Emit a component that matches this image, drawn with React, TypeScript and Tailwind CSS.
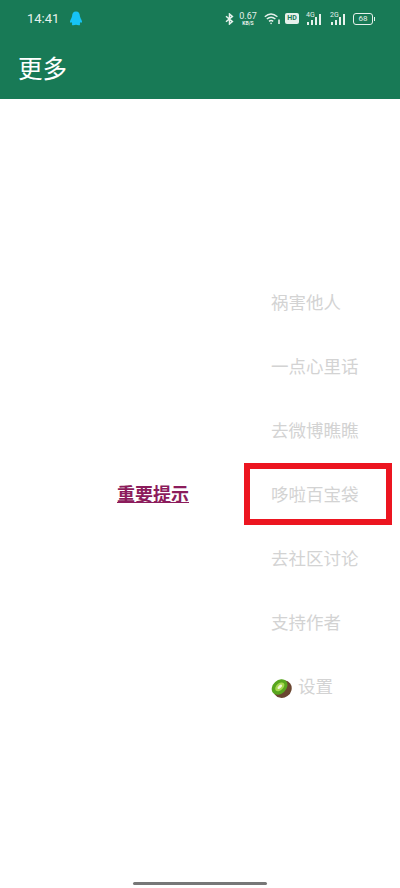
const FONT = "font-['Roboto','Noto_Sans_CJK_SC',sans-serif]";

const menuItems = ["祸害他人", "一点心里话", "去微博瞧瞧", "哆啦百宝袋", "去社区讨论", "支持作者"];

function QQIcon() {
  return (
    <svg width="14" height="15" viewBox="0 0 14 15" fill="#16c3f5">
      <path d="M7 0.5C4.3 0.5 3.2 2.6 3.1 5C2.9 6.6 1.4 8.6 1 10.6C0.8 11.8 1.4 12 2.3 11.1C2.6 12 3 12.5 3.3 12.9C2.6 13.3 2.6 14.3 4.2 14.3C5.4 14.3 6.3 14 7 13.8C7.7 14 8.6 14.3 9.8 14.3C11.4 14.3 11.4 13.3 10.7 12.9C11 12.5 11.4 12 11.7 11.1C12.6 12 13.2 11.8 13 10.6C12.6 8.6 11.1 6.6 10.9 5C10.8 2.6 9.7 0.5 7 0.5Z" />
    </svg>
  );
}

function BluetoothIcon() {
  return (
    <svg width="9" height="12" viewBox="0 0 9 12" fill="none" stroke="#e6f1ec" strokeWidth="1.5">
      <path d="M1 3.2L7.4 8.6L4.5 11V1L7.4 3.4L1 8.8" />
    </svg>
  );
}

function WifiIcon() {
  return (
    <svg width="16" height="12" viewBox="0 0 16 12" fill="none" stroke="#e6f1ec" strokeWidth="1.4">
      <path d="M0.8 3.8C4.6 0.4 9.4 0.4 13.4 3.8" />
      <path d="M2.8 6.1C5.4 3.8 8.8 3.8 11.4 6.1" />
      <path d="M5 8.4C6.3 7.3 7.9 7.3 9.2 8.4" />
      <circle cx="7.1" cy="10.4" r="0.8" fill="#e6f1ec" stroke="none" />
      <path d="M15 6.5V11" strokeWidth="1.6" />
    </svg>
  );
}

function SignalIcon({ label }: { label: string }) {
  return (
    <div className="relative h-[12px] w-[16px]">
      <span className="absolute -top-[1px] left-0 text-[7px] leading-[7px] text-[#e6f1ec]">{label}</span>
      <svg className="absolute inset-0" width="16" height="12" viewBox="0 0 16 12" fill="#e6f1ec">
        <rect x="1" y="9" width="2" height="3" />
        <rect x="5" y="7" width="2" height="5" />
        <rect x="9" y="4" width="2" height="8" />
        <rect x="13" y="1" width="2" height="11" />
      </svg>
    </div>
  );
}

function KiwiIcon() {
  return (
    <svg width="21" height="20" viewBox="0 0 21 20">
      <ellipse cx="11.5" cy="11" rx="9.5" ry="8.6" fill="#6a4630" transform="rotate(-35 11.5 11)" />
      <ellipse cx="8.6" cy="9" rx="8.8" ry="6.6" fill="#58a61e" transform="rotate(-42 8.6 9)" />
      <ellipse cx="8.8" cy="8.8" rx="5.4" ry="3.4" fill="#a6d84e" transform="rotate(-42 8.8 8.8)" />
      <ellipse cx="8.8" cy="8.8" rx="2.8" ry="1.4" fill="#f1f6d8" transform="rotate(-42 8.8 8.8)" />
    </svg>
  );
}

export default function App() {
  return (
    <div className={`relative flex h-[888px] w-[400px] flex-col overflow-hidden bg-white ${FONT}`}>
      <header className="h-[99px] shrink-0 bg-[#187a56] text-white">
        {/* status bar */}
        <div className="flex h-[37px] items-center pl-[27px] pr-[25px]">
          <span className="text-[13px] text-[#e6f1ec]">14:41</span>
          <span className="ml-[10px] flex"><QQIcon /></span>
          <div className="ml-auto flex items-center">
            <BluetoothIcon />
            <div className="ml-[5px] flex w-[18px] flex-col items-center text-[#e6f1ec]">
              <span className="text-[9px] leading-[8px]">0.67</span>
              <span className="text-[5px] font-bold leading-[6px]">KB/S</span>
            </div>
            <span className="ml-[7px] flex"><WifiIcon /></span>
            <span className="ml-[5px] flex h-[11px] w-[14px] items-center justify-center rounded-[2px] bg-[#e6f1ec] text-[7px] font-bold text-[#187a56]">HD</span>
            <span className="ml-[7px] flex"><SignalIcon label="4G" /></span>
            <span className="ml-[8px] flex"><SignalIcon label="2G" /></span>
            <div className="ml-[7px] flex items-center">
              <span className="flex h-[12px] w-[20px] items-center justify-center rounded-[3px] border border-[#e6f1ec] text-[8px] text-[#e6f1ec]">68</span>
              <span className="ml-[1px] h-[4px] w-[1px] bg-[#e6f1ec]" />
            </div>
          </div>
        </div>
        <h1 className="pl-[18px] pt-[17px] text-[24.5px] font-normal leading-[32px]">更多</h1>
      </header>

      <main className="flex flex-1 items-center justify-end">
        <a className="mr-[82px] mt-[1px] text-[18px] font-bold text-[#8c1c5c] underline">重要提示</a>
        <ul className="w-[129px] text-[17.5px] text-[#d3d3d3]">
          {menuItems.map((item, i) => (
            <li key={item} className="relative flex h-[64px] items-center pt-[4px]">
              {item}
              {i === 3 && (
                <span className="absolute -left-[27px] top-[1px] h-[62px] w-[148px] border-[6px] border-[#ec1520]" />
              )}
            </li>
          ))}
          <li className="flex h-[64px] items-center gap-[6px] pt-[4px]">
            <KiwiIcon />
            设置
          </li>
        </ul>
      </main>

      {/* home indicator */}
      <div className="absolute bottom-[3px] left-[133px] h-[3px] w-[134px] rounded-full bg-[#777777]" />
    </div>
  );
}
